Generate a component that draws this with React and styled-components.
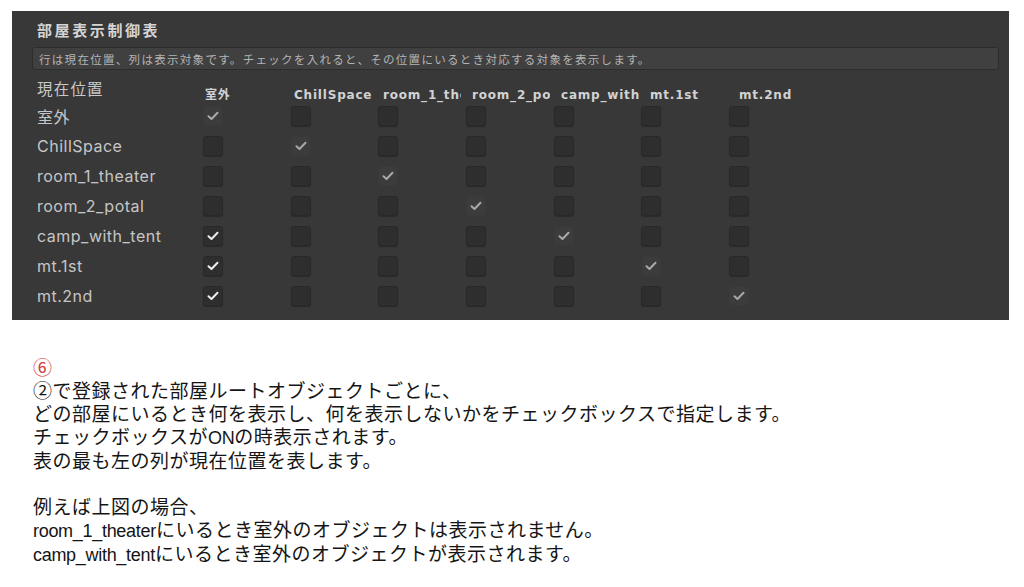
import React from 'react';
import styled, { createGlobalStyle } from 'styled-components';

const GlobalStyle = createGlobalStyle`
  body {
    margin: 0;
    background: #ffffff;
    font-family: "Liberation Sans", "Noto Sans CJK JP", sans-serif;
  }
`;

const Page = styled.div`
  width: 1024px;
  padding-top: 11px;
`;

const Panel = styled.section`
  margin: 0 15px 0 12px;
  background: #383838;
  padding: 9px 10px 9px 20px;
`;

const Title = styled.h2`
  margin: 0 0 0 5px;
  font-family: "Noto Sans CJK JP", sans-serif;
  font-size: 15px;
  font-weight: 700;
  letter-spacing: 2.6px;
  line-height: 20px;
  color: #d4d4d4;
`;

const HelpBox = styled.div`
  margin-top: 7px;
  height: 23px;
  box-sizing: border-box;
  display: flex;
  align-items: center;
  padding-left: 6px;
  background: #404040;
  border: 1px solid #2d2d2d;
  border-radius: 3px;
  font-family: "Noto Sans CJK JP", sans-serif;
  font-size: 11.5px;
  letter-spacing: 1.3px;
  color: #b4b4b4;
`;

const HeadRow = styled.div`
  display: flex;
  align-items: flex-end;
  height: 31px;
  padding-left: 5px;
`;

const Corner = styled.div`
  width: 168px;
  align-self: flex-start;
  margin-top: 9px;
  font-family: "Noto Sans CJK JP", sans-serif;
  font-size: 15.5px;
  letter-spacing: 1.2px;
  line-height: 18px;
  color: #c8c8c8;
`;

const ColHead = styled.div`
  width: 89px;
  margin-bottom: -2px;
  line-height: 15px;
  font-family: "DejaVu Sans", "Noto Sans CJK JP", sans-serif;
  font-size: 12px;
  font-weight: 700;
  letter-spacing: 0.8px;
  color: #d2d2d2;
`;

const ColText = styled.span`
  display: block;
  max-width: 78px;
  overflow: hidden;
  white-space: nowrap;
`;

const Row = styled.div`
  display: flex;
  align-items: center;
  height: 30px;
  padding-left: 5px;
`;

const RowLabel = styled.div`
  width: 166px;
  font-family: "Inter", "Noto Sans CJK JP", sans-serif;
  font-size: 16px;
  letter-spacing: 0.5px;
  color: #c6c6c6;
`;

const Cell = styled.div`
  width: 87.7px;
`;

const Box = styled.div`
  width: 20px;
  height: 20px;
  box-sizing: border-box;
  border-radius: 3px;
  display: flex;
  align-items: center;
  justify-content: center;
  background: ${(p) => (p.$dim ? '#3c3c3c' : '#2e2e2e')};
  border: 1px solid ${(p) => (p.$dim ? '#393939' : '#292929')};
  box-shadow: ${(p) => (p.$dim ? 'none' : '0 1px 1px rgba(0, 0, 0, 0.25)')};
`;

const Notes = styled.div`
  padding: 37px 0 0 33px;
  font-family: "Liberation Sans", "Noto Sans CJK JP", sans-serif;
  font-size: 19px;
  letter-spacing: 0.5px;
  line-height: 23px;
  color: #151515;
`;

const Line = styled.div`
  min-height: 23px;
  color: ${(p) => p.$color || 'inherit'};
`;

const Term = styled.span`
  font-size: 18px;
  letter-spacing: -0.3px;
`;

const rooms = ['室外', 'ChillSpace', 'room_1_theater', 'room_2_potal', 'camp_with_tent', 'mt.1st', 'mt.2nd'];

// outdoor objects stay visible while inside these rooms
const outdoorOn = new Set([4, 5, 6]);

function Check({ color }) {
  return (
    <svg width="12" height="10" viewBox="0 0 12 10">
      <path d="M1.5 5.2 L4.5 8 L10.5 1.8" fill="none" stroke={color} strokeWidth="2" strokeLinecap="round" strokeLinejoin="round" />
    </svg>
  );
}

function Toggle({ row, col }) {
  if (row === col) {
    return (
      <Box $dim>
        <Check color="#a9a9a9" />
      </Box>
    );
  }
  if (col === 0 && outdoorOn.has(row)) {
    return (
      <Box>
        <Check color="#ececec" />
      </Box>
    );
  }
  return <Box />;
}

export default function App() {
  return (
    <Page>
      <GlobalStyle />
      <Panel>
        <Title>部屋表示制御表</Title>
        <HelpBox>行は現在位置、列は表示対象です。チェックを入れると、その位置にいるとき対応する対象を表示します。</HelpBox>
        <HeadRow>
          <Corner>現在位置</Corner>
          {rooms.map((name) => (
            <ColHead key={name}>
              <ColText>{name}</ColText>
            </ColHead>
          ))}
        </HeadRow>
        {rooms.map((name, r) => (
          <Row key={name}>
            <RowLabel>{name}</RowLabel>
            {rooms.map((col, c) => (
              <Cell key={col}>
                <Toggle row={r} col={c} />
              </Cell>
            ))}
          </Row>
        ))}
      </Panel>

      <Notes>
        <Line $color="#d23a3a">⑥</Line>
        <Line>②で登録された部屋ルートオブジェクトごとに、</Line>
        <Line>どの部屋にいるとき何を表示し、何を表示しないかをチェックボックスで指定します。</Line>
        <Line>チェックボックスが<Term>ON</Term>の時表示されます。</Line>
        <Line>表の最も左の列が現在位置を表します。</Line>
        <Line />
        <Line>例えば上図の場合、</Line>
        <Line><Term>room_1_theater</Term>にいるとき室外のオブジェクトは表示されません。</Line>
        <Line><Term>camp_with_tent</Term>にいるとき室外のオブジェクトが表示されます。</Line>
      </Notes>
    </Page>
  );
}
